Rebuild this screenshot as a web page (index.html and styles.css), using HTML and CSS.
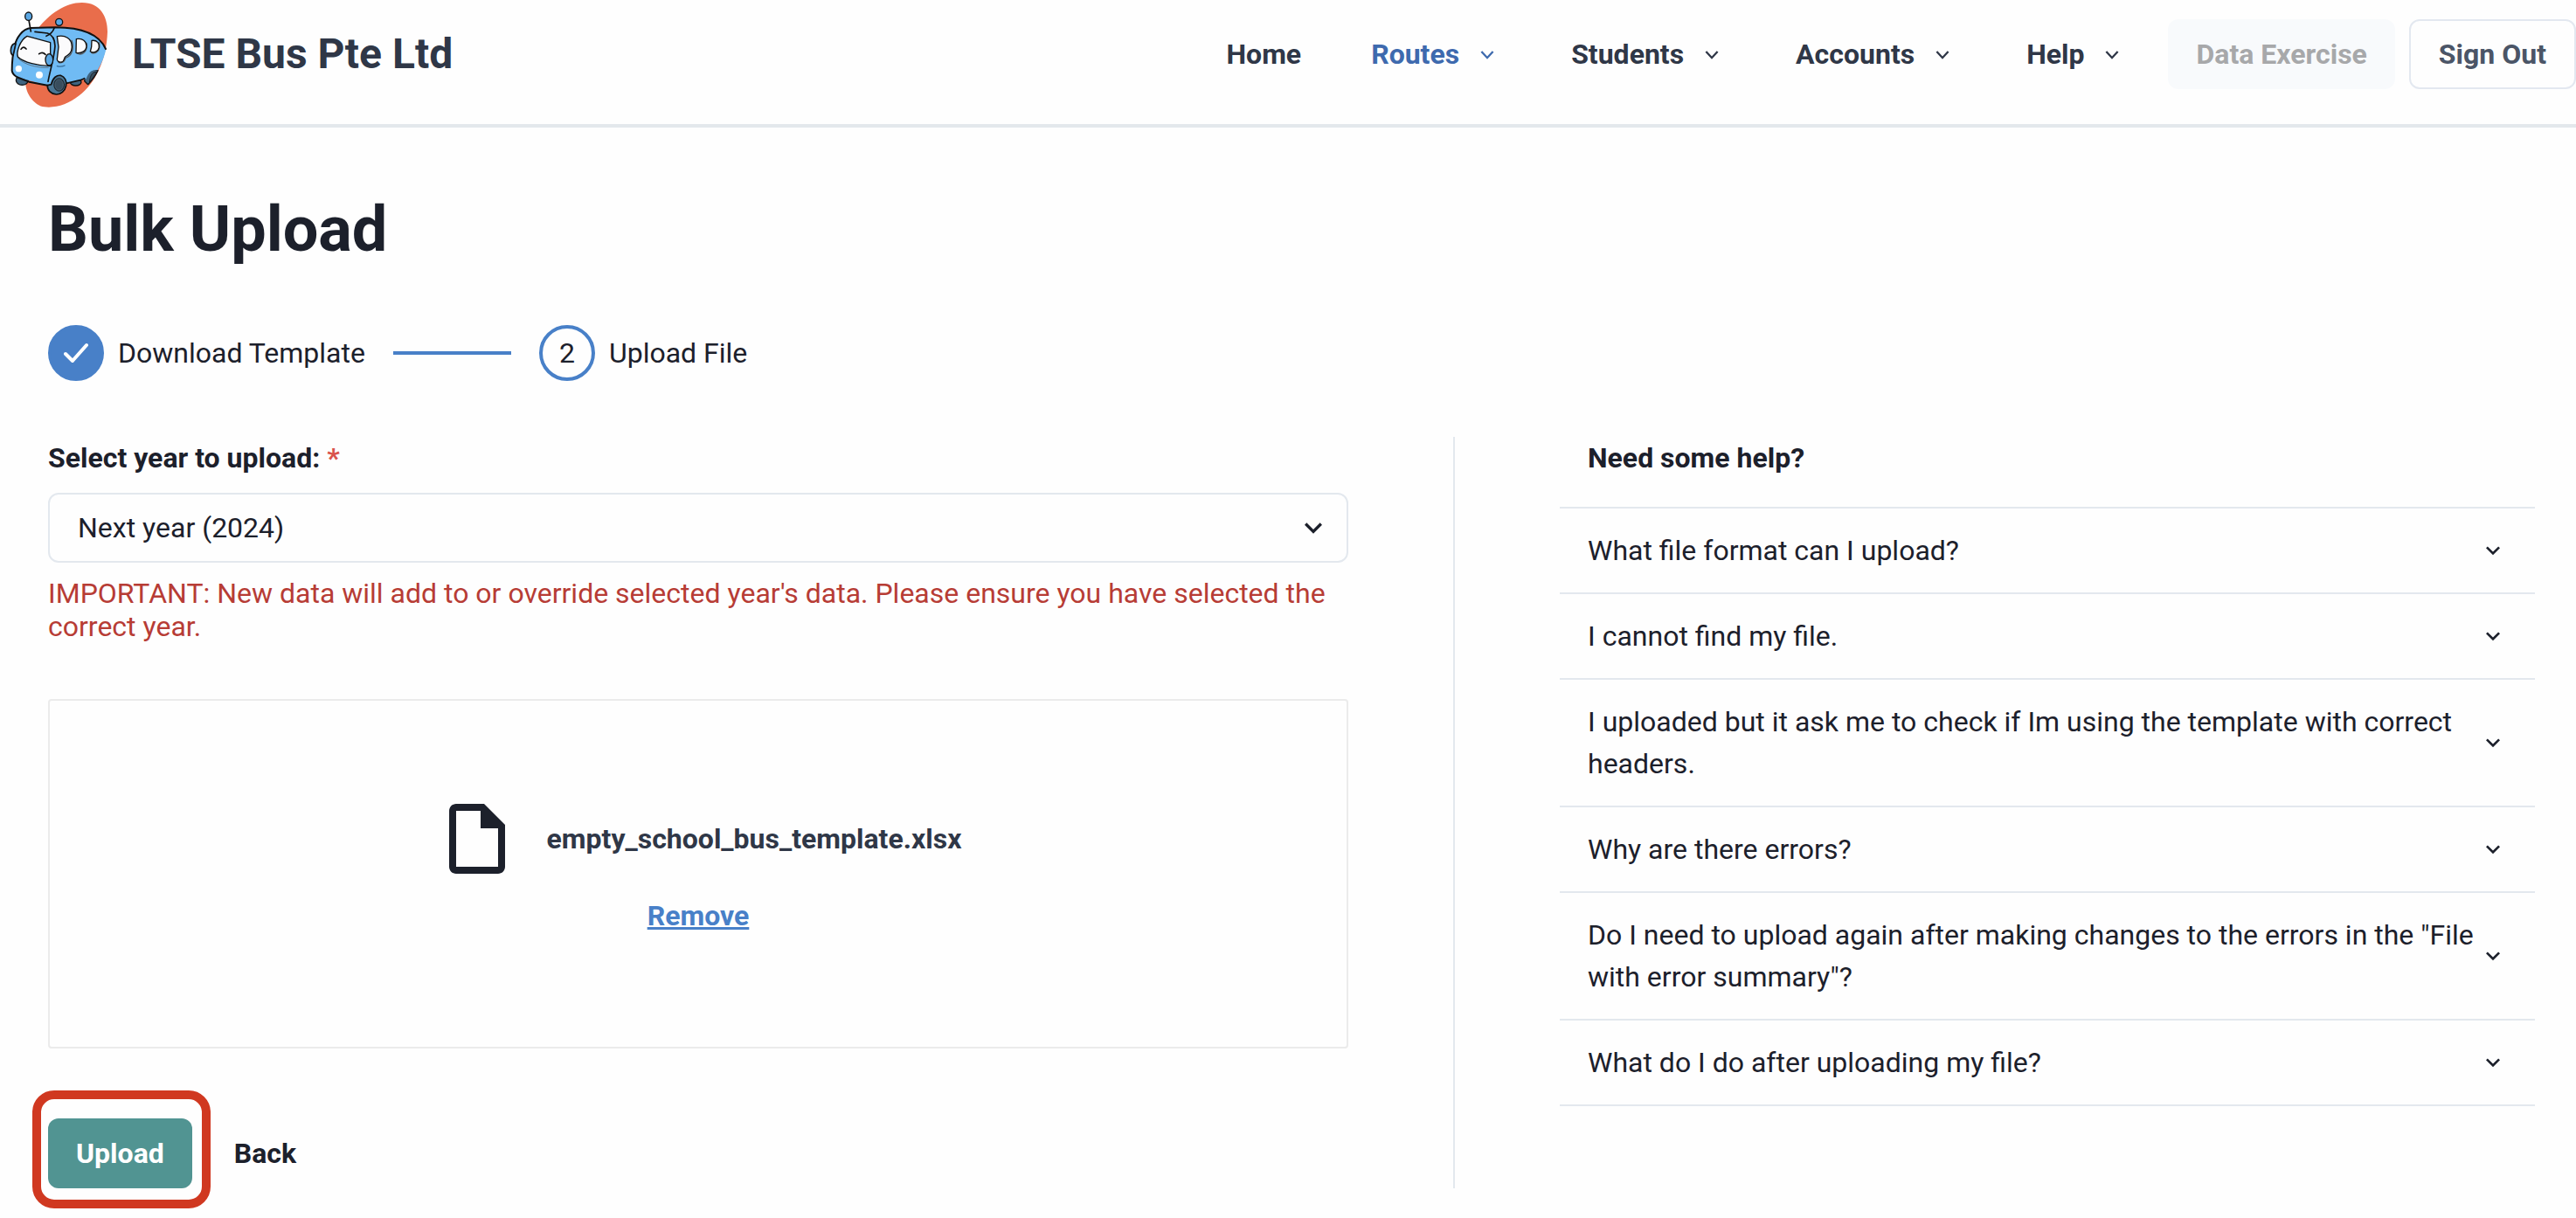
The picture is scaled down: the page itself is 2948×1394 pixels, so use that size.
FILE: index.html
```html
<!DOCTYPE html>
<html lang="en">
<head>
<meta charset="utf-8">
<meta name="viewport" content="width=device-width, initial-scale=1">
<title>Bulk Upload - LTSE Bus Pte Ltd</title>
<link rel="stylesheet" href="styles.css">
</head>
<body>
<svg class="sprite" aria-hidden="true">
  <symbol id="chevron-thin" viewBox="0 0 24 24"><path d="M16.3 9.2 12 13.8 7.7 9.2 6.4 10.4 12 16.4 17.6 10.4z"/></symbol>
  <symbol id="chevron" viewBox="0 0 24 24"><path d="M16.59 8.59L12 13.17 7.41 8.59 6 10l6 6 6-6z"/></symbol>
</svg>
<header class="header">
  <a class="brand" href="#">
    <svg class="brand-logo" viewBox="0 0 420 366" aria-hidden="true">
      <path fill="#e96d4b" d="M281 6C345 6 369 55 369 106C366 205 325 286 272 325C235 355 191 369 152 364C120 360 91 323 88 287L130 96C168 45 225 6 281 6Z"/>
      <g stroke="#111" stroke-width="4" stroke-linejoin="round" stroke-linecap="round">
        <ellipse cx="76" cy="272" rx="21" ry="17" fill="#3f6480"/>
        <ellipse cx="260" cy="279" rx="19" ry="12" fill="#3f6480"/>
        <path fill="#3f6480" d="M290 275C295 247 316 230 336 239C327 259 316 273 302 287Z"/>
        <path stroke="none" fill="#70bbf4" d="M46 180C46 137 68 99 106 93L190 90C270 90 330 103 364 166C358 195 347 217 335 238C312 235 302 250 296 268L228 282L163 291L59 262Q42 255 41 235Z"/>
        <path stroke-width="6" fill="none" d="M363 165C338 110 274 91 190 91L106 93C76 96 56 128 50 155C43 185 41 210 41 240Q44 256 64 264L100 278L163 290"/>
        <path fill="none" stroke-width="5" d="M228 283L276 272L290 266M120 106L163 111Q188 119 189 155C186 196 171 242 165 277M159 121Q180 112 186 94M99 66L106 105"/>
        <path fill="#fbfbfc" d="M93 121L173 143V224C133 224 80 211 61 192C56 175 68 135 93 121Z"/>
        <path fill="none" stroke-width="2" stroke="#555" d="M62 197C84 221 134 231 166 229"/>
        <path fill="none" stroke-width="5" d="M72 166Q80 153 90 165M134 182Q146 173 156 184"/>
        <ellipse cx="98" cy="53" rx="12" ry="14" fill="#5ba7e3"/>
        <ellipse cx="203" cy="73" rx="12" ry="12" fill="#5ba7e3"/>
        <path fill="#5ba7e3" stroke-width="5" d="M54 147C37 143 31 179 45 188Z"/>
        <ellipse cx="169" cy="202" rx="13" ry="20" fill="#5ba7e3"/>
        <path fill="none" stroke="#555" d="M202 212Q220 215 225 196C248 190 255 160 246 136M264 180C285 190 302 170 297 145M314 178C331 184 347 167 340 143"/>
        <path fill="#fbfbfc" d="M196 122C223 116 247 129 247 158C246 181 233 186 224 192C219 198 221 208 212 210C203 212 197 208 196 201L201 158Z"/>
        <path fill="#fbfbfc" d="M262 131C284 127 297 139 297 155C296 173 279 181 261 178Z"/>
        <path fill="#fbfbfc" d="M315 136C334 134 342 146 340 160C337 174 323 180 310 174L314 158Z"/>
        <path fill="none" stroke="#346b98" d="M196 224Q210 228 222 222"/>
        <path fill="#4b7796" stroke-width="5" d="M163 290L176 287C181 263 196 254 208 256C223 261 230 276 227 291C223 309 209 322 193 321C174 319 162 306 163 290Z"/>
        <ellipse cx="203" cy="288" rx="18" ry="22" fill="#2f4353" stroke-width="2"/>
        <ellipse cx="203" cy="288" rx="14" ry="18" fill="#384d5d" stroke="#718391" stroke-width="1"/>
        <path fill="#384d5d" stroke-width="2" d="M307 278C310 252 319 243 332 244C324 258 316 269 307 278Z"/>
      </g>
      <circle cx="64" cy="233" r="11" fill="#fff"/>
      <circle cx="135" cy="254" r="12" fill="#fff"/>
    </svg>
    <span>LTSE Bus Pte Ltd</span>
  </a>
  <nav class="nav" aria-label="Main">
    <a class="nav-link" href="#">Home</a>
    <a class="nav-link nav-link-active" href="#">Routes<svg class="icon"><use href="#chevron-thin"/></svg></a>
    <a class="nav-link" href="#">Students<svg class="icon"><use href="#chevron-thin"/></svg></a>
    <a class="nav-link" href="#">Accounts<svg class="icon"><use href="#chevron-thin"/></svg></a>
    <a class="nav-link" href="#">Help<svg class="icon"><use href="#chevron-thin"/></svg></a>
  </nav>
  <div class="header-actions">
    <button class="button button-muted" type="button" disabled>Data Exercise</button>
    <button class="button button-outline" type="button">Sign Out</button>
  </div>
</header>
<main class="main">
  <h1 class="title">Bulk Upload</h1>
  <ol class="steps">
    <li class="step">
      <span class="step-mark step-mark-done"><svg class="check" viewBox="0 0 28 24" aria-hidden="true"><path d="M2 13L10 21L26 3"/></svg></span>
      <span>Download Template</span>
    </li>
    <li class="step-line" aria-hidden="true"></li>
    <li class="step" aria-current="step">
      <span class="step-mark">2</span>
      <span>Upload File</span>
    </li>
  </ol>
  <div class="columns">
    <form class="upload-form">
      <label class="label" for="year">Select year to upload: <span class="required">*</span></label>
      <div class="select-box">
        <select class="select" id="year">
          <option>Next year (2024)</option>
        </select>
        <svg class="select-icon" aria-hidden="true"><use href="#chevron"/></svg>
      </div>
      <p class="warning">IMPORTANT: New data will add to or override selected year's data. Please ensure you have selected the correct year.</p>
      <div class="dropzone">
        <div class="file">
          <svg class="file-icon" viewBox="0 0 24 24" aria-hidden="true"><path d="M14 2H6c-1.1 0-1.99.9-1.99 2L4 20c0 1.1.89 2 1.99 2H18c1.1 0 2-.9 2-2V8l-6-6zM6 20V4h7v5h5v11H6z"/></svg>
          <span>empty_school_bus_template.xlsx</span>
        </div>
        <button class="remove" type="button">Remove</button>
      </div>
      <div class="form-actions">
        <div class="highlight"><button class="button button-primary" type="submit">Upload</button></div>
        <button class="button button-plain" type="button">Back</button>
      </div>
    </form>
    <div class="divider"></div>
    <section class="help">
      <h2 class="help-title">Need some help?</h2>
      <div class="accordion">
        <button class="question" type="button" aria-expanded="false"><span>What file format can I upload?</span><svg class="icon"><use href="#chevron"/></svg></button>
        <button class="question" type="button" aria-expanded="false"><span>I cannot find my file.</span><svg class="icon"><use href="#chevron"/></svg></button>
        <button class="question" type="button" aria-expanded="false"><span>I uploaded but it ask me to check if Im using the template with correct headers.</span><svg class="icon"><use href="#chevron"/></svg></button>
        <button class="question" type="button" aria-expanded="false"><span>Why are there errors?</span><svg class="icon"><use href="#chevron"/></svg></button>
        <button class="question" type="button" aria-expanded="false"><span>Do I need to upload again after making changes to the errors in the "File with error summary"?</span><svg class="icon"><use href="#chevron"/></svg></button>
        <button class="question" type="button" aria-expanded="false"><span>What do I do after uploading my file?</span><svg class="icon"><use href="#chevron"/></svg></button>
      </div>
    </section>
  </div>
</main>
</body>
</html>
```
FILE: styles.css
```css
* {
  box-sizing: border-box;
}

body {
  margin: 0;
  background: #fefefe;
  color: #1c202b;
  font: 32px/48px Roboto, "Liberation Sans", sans-serif;
}

button,
select {
  margin: 0;
  font: inherit;
  color: inherit;
}

a {
  color: inherit;
  text-decoration: none;
}

.sprite {
  display: none;
}

.icon {
  flex: none;
  width: 32px;
  height: 32px;
  fill: currentColor;
}

/* Header */

.header {
  display: flex;
  align-items: center;
  padding-bottom: 18px;
  border-bottom: 4px solid #e3e8ec;
  color: #2f3747;
  font-weight: 700;
}

.brand {
  display: flex;
  align-items: center;
  gap: 11px;
  height: 124px;
  margin-right: auto;
  font-size: 48px;
}

.brand-logo {
  width: 140px;
  height: 122px;
}

.nav {
  display: flex;
  gap: 80px;
  margin-right: 48px;
}

.nav-link {
  display: flex;
  align-items: center;
  gap: 16px;
}

.nav-link-active {
  color: #3e6aae;
}

.header-actions {
  display: flex;
  gap: 16px;
}

.button {
  height: 80px;
  padding: 0 32px;
  border: 0;
  border-radius: 12px;
  background: none;
  font-weight: 700;
  white-space: nowrap;
}

.button-muted {
  background: #f8fafc;
  color: #a7a8aa;
}

.button-outline {
  border: 2px solid #e3e8f0;
  color: #4b5567;
}

.button-primary {
  background: #519492;
  color: #fff;
}

/* Page */

.main {
  padding: 74px 47px 32px 55px;
}

.title {
  margin: 0 0 66px;
  font-size: 72px;
  line-height: 86px;
}

.steps {
  display: flex;
  align-items: center;
  gap: 32px;
  margin: 0 0 64px;
  padding: 0;
  list-style: none;
}

.step {
  display: flex;
  align-items: center;
  gap: 16px;
}

.step-mark {
  display: flex;
  align-items: center;
  justify-content: center;
  width: 64px;
  height: 64px;
  border: 4px solid #4880c8;
  border-radius: 50%;
}

.step-mark-done {
  background: #4880c8;
}

.check {
  width: 28px;
  height: 24px;
  fill: none;
  stroke: #fff;
  stroke-width: 4;
  stroke-linecap: round;
  stroke-linejoin: round;
}

.step-line {
  width: 135px;
  height: 4px;
  background: #4880c8;
}

.columns {
  display: grid;
  grid-template-columns: 4fr 2px 3fr;
  column-gap: 120px;
}

.divider {
  background: #e3e8ee;
}

/* Upload form */

.label {
  display: block;
  margin-bottom: 16px;
  font-weight: 700;
}

.required {
  color: #d9534c;
}

.select-box {
  display: grid;
  align-items: center;
}

.select,
.select-icon {
  grid-area: 1 / 1;
}

.select {
  width: 100%;
  height: 80px;
  padding: 0 80px 0 32px;
  border: 2px solid #e3e8ee;
  border-radius: 12px;
  background: transparent;
  appearance: none;
}

.select-icon {
  justify-self: end;
  width: 40px;
  height: 40px;
  margin-right: 20px;
  fill: currentColor;
  pointer-events: none;
}

.warning {
  margin: 16px 0 64px;
  color: #b73c35;
  line-height: 38px;
}

.dropzone {
  display: flex;
  flex-direction: column;
  align-items: center;
  justify-content: center;
  min-height: 400px;
  border: 2px solid #ebebeb;
  border-radius: 4px;
}

.file {
  display: flex;
  align-items: center;
  gap: 32px;
  color: #2f3747;
  font-weight: 700;
}

.file-icon {
  width: 96px;
  height: 96px;
  fill: #1c202b;
}

.remove {
  height: 80px;
  padding: 0;
  border: 0;
  background: none;
  color: #4880c8;
  font-weight: 700;
  text-decoration: underline;
}

.form-actions {
  display: flex;
  gap: 16px;
  margin-top: 80px;
}

.highlight {
  position: relative;
  display: flex;
}

.highlight::after {
  content: "";
  position: absolute;
  inset: -32px -21px -23px -18px;
  border: 10px solid #d03820;
  border-radius: 25px;
  pointer-events: none;
}

/* Help */

.help-title {
  margin: 0 0 32px;
  padding: 0 32px;
  font-size: 32px;
  line-height: 48px;
}

.accordion {
  border-bottom: 2px solid #e3e8ee;
}

.question {
  display: flex;
  align-items: center;
  justify-content: space-between;
  width: 100%;
  padding: 24px 32px;
  border: 0;
  border-top: 2px solid #e3e8ee;
  background: none;
  text-align: left;
}
```
